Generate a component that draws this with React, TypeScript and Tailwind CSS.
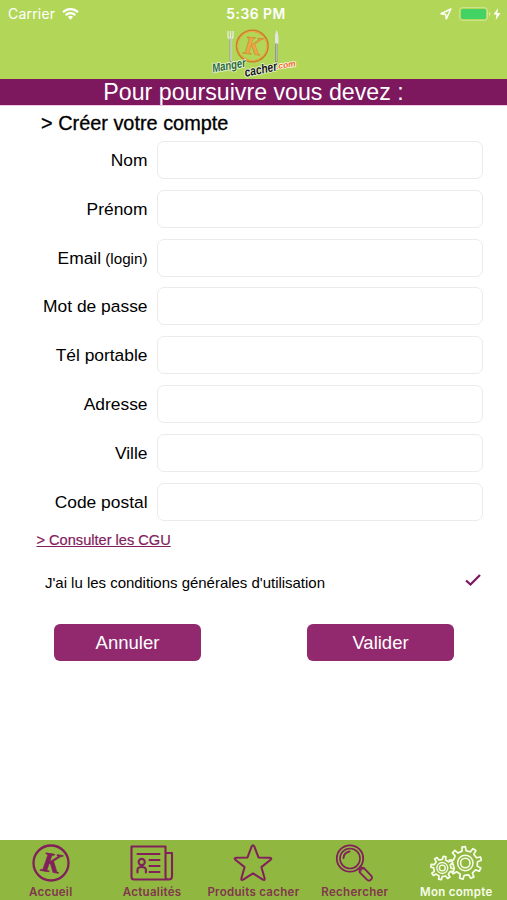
import type { ReactNode } from "react";

type Field = {
  label: string;
  hint?: string;
  name: string;
  type?: string;
};

type Tab = {
  label: string;
  icon: ReactNode;
  active?: boolean;
};

const fields: Field[] = [
  { label: "Nom", name: "lastname" },
  { label: "Prénom", name: "firstname" },
  { label: "Email", hint: "(login)", name: "email", type: "email" },
  { label: "Mot de passe", name: "password", type: "password" },
  { label: "Tél portable", name: "phone", type: "tel" },
  { label: "Adresse", name: "address" },
  { label: "Ville", name: "city" },
  { label: "Code postal", name: "zip" },
];

// Outline of a gear: flat teeth joined by short flanks
function gearPath(cx: number, cy: number, outer: number, inner: number, teeth: number, turn = 0) {
  const step = (Math.PI * 2) / teeth;
  const points: string[] = [];

  for (let i = 0; i < teeth; i++) {
    const a = i * step + turn;
    const corners: [number, number][] = [
      [inner, a - step * 0.24],
      [outer, a - step * 0.15],
      [outer, a + step * 0.15],
      [inner, a + step * 0.24],
    ];
    corners.forEach(([r, t]) => {
      points.push(`${(cx + r * Math.cos(t)).toFixed(2)} ${(cy + r * Math.sin(t)).toFixed(2)}`);
    });
  }

  return `M${points.join("L")}Z`;
}

function WifiIcon() {
  return (
    <svg viewBox="0 0 17 12" className="h-3 w-[17px]" fill="none" stroke="#fff" strokeWidth="2.2">
      <path d="M1 4.3a10.6 10.6 0 0 1 15 0M3.7 7.1a6.8 6.8 0 0 1 9.6 0" />
      <path d="M8.5 11.7 5.9 9.1a3.7 3.7 0 0 1 5.2 0Z" fill="#fff" stroke="none" />
    </svg>
  );
}

function LocationIcon() {
  return (
    <svg viewBox="0 0 12 12" className="size-3" fill="none" stroke="#fff" strokeWidth="1.5" strokeLinejoin="round">
      <path d="M10.8 1 1 5.7l4.7.7.6 4.6Z" />
    </svg>
  );
}

function BatteryIcon() {
  return (
    <svg viewBox="0 0 32 14" className="h-3.5 w-8">
      <rect x=".6" y=".6" width="27.8" height="12.8" rx="3" fill="none" stroke="#cfe695" strokeWidth="1" />
      <rect x="2" y="2" width="25" height="10" rx="1.6" fill="#43d365" />
      <path d="M30 5c1.8.6 1.8 3.4 0 4Z" fill="#d9ecae" />
    </svg>
  );
}

function BoltIcon() {
  return (
    <svg viewBox="0 0 8 12" className="h-3 w-2" fill="#fff">
      <path d="M5 0 .6 6.5h2.8L2.7 12l4.8-7H4.3Z" />
    </svg>
  );
}

function Logo() {
  return (
    <svg viewBox="0 0 88 52" className="ml-[3px] h-[52px] w-[88px] overflow-visible">
      <path d="M17 4v5q0 2.8 2.5 2.8T22 9V4M19.500 4v7" fill="none" stroke="#e8ebe4" strokeWidth="1.3" />
      <path d="M19.500 11.500V35" stroke="#9da39c" strokeWidth="2.2" />
      <path d="M20 12v22" stroke="#e8ebe6" strokeWidth=".9" />
      <path d="M65.500 3q2.500 3 2 14H64V8Z" fill="#e3e6df" />
      <path d="M65.300 16.500V35" stroke="#8e938f" strokeWidth="2.4" />
      <path d="M65.600 17v17" stroke="#c8cdc6" strokeWidth=".8" />
      <circle cx="41.3" cy="19" r="15.4" fill="none" stroke="#c97f28" strokeWidth="2.4" />
      <circle cx="41.3" cy="19" r="14.8" fill="none" stroke="#f0b552" strokeWidth=".9" />
      <text
        x="41.5"
        y="27.500"
        textAnchor="middle"
        transform="rotate(6 41 19)"
        className="font-['Liberation_Serif',serif] text-[26px] font-bold italic"
        fill="#eda947"
        stroke="#c97f28"
        strokeWidth=".5"
      >
        K
      </text>
      <g
        className="font-['Liberation_Sans',sans-serif] font-bold italic"
        stroke="#f4f8e8"
        strokeWidth="1.6"
        paintOrder="stroke"
        strokeLinejoin="round"
      >
        <text x="2" y="45.500" transform="rotate(-10 2 45.500)" fill="#2a6b35" fontSize="12.5" textLength="34" lengthAdjust="spacingAndGlyphs">
          Manger
        </text>
        <text x="34.500" y="50" transform="rotate(-12 34.500 50)" fill="#151a13" fontSize="13" textLength="33" lengthAdjust="spacingAndGlyphs">
          cacher
        </text>
        <text x="65.5" y="42" transform="rotate(-8 65.5 42)" fill="#f36a24" fontSize="8.4">
          .com
        </text>
      </g>
    </svg>
  );
}

function HomeIcon() {
  return (
    <svg viewBox="0 0 44 40" className="h-10 w-11">
      <circle cx="22" cy="20" r="17.5" fill="none" stroke="#81205b" strokeWidth="2.3" />
      <text
        x="22"
        y="29"
        textAnchor="middle"
        transform="rotate(9 22 20)"
        className="font-['Liberation_Serif',serif] text-[28px] italic"
        fill="#81205b"
        stroke="#81205b"
        strokeWidth=".6"
      >
        K
      </text>
    </svg>
  );
}

function NewsIcon() {
  return (
    <svg viewBox="0 0 44 40" className="h-10 w-11" fill="none" stroke="#81205b" strokeWidth="2.1" strokeLinejoin="round" strokeLinecap="round">
      <path d="M35.5 33.5V3.5H1.5v30.500q0 2.500 2.500 2.500h34.500M35.500 10h6.500v23.500q0 3-3.300 3t-3.200-3" />
      <path d="M7.500 11h22M19.500 17h10M19.500 23h10M19.500 29h10" />
      <circle cx="11.7" cy="19" r="3.1" />
      <path d="M7.500 29.500v-2.500q0-3 4.200-3t4.200 3v2.500" />
    </svg>
  );
}

function StarIcon() {
  return (
    <svg viewBox="0 0 44 40" className="h-10 w-11" fill="none" stroke="#81205b" strokeWidth="2" strokeLinejoin="round">
      <path d="M20.700 3.400q1.300-2.200 2.600 0l4.200 11 11.400.3q2.400.3.700 2.100l-9.200 7.300 3.200 11.200q.4 2.400-1.800 1.400L22 30.300l-9.800 6.400q-2.200 1-1.800-1.400l3.200-11.200-9.200-7.300q-1.700-1.800.7-2.100l11.400-.3Z" />
    </svg>
  );
}

function SearchIcon() {
  return (
    <svg viewBox="0 0 44 40" className="h-10 w-11" fill="none" stroke="#81205b" strokeLinejoin="round" strokeLinecap="round">
      <circle cx="17" cy="15.5" r="13.2" strokeWidth="1.8" />
      <circle cx="17" cy="15.5" r="10" strokeWidth="1.6" />
      <path d="M10.500 15q.5-5.500 6-6.500" strokeWidth="1.9" />
      <path d="m25.500 25.500 2.500 2.500M27.500 23.500l2.500 2.500" strokeWidth="1.4" />
      <path d="m31 25.200 7.300 7.600q1.500 2-.3 3.800t-3.800.3l-7.500-7.600q-1-1.300 1.200-3.300t3.100-.8Z" strokeWidth="1.8" />
    </svg>
  );
}

function GearsIcon() {
  return (
    <svg viewBox="0 0 52 40" className="h-10 w-[52px]" fill="none" stroke="#f7fce9" strokeWidth="1.7" strokeLinejoin="round">
      <path d={gearPath(35.3, 20, 16.3, 12.3, 9, -Math.PI / 2 - 0.1)} />
      <circle cx="35.3" cy="20" r="7.7" strokeWidth="1.5" />
      <circle cx="35.3" cy="20" r="4.7" strokeWidth="1.6" />
      <path d={gearPath(12.3, 25, 11.7, 8.7, 8, 0.2)} fill="#90b840" />
      <circle cx="12.3" cy="25" r="5.5" strokeWidth="1.3" />
      <circle cx="12.3" cy="25" r="2.9" strokeWidth="1.4" />
    </svg>
  );
}

const tabs: Tab[] = [
  { label: "Accueil", icon: <HomeIcon /> },
  { label: "Actualités", icon: <NewsIcon /> },
  { label: "Produits cacher", icon: <StarIcon /> },
  { label: "Rechercher", icon: <SearchIcon /> },
  { label: "Mon compte", icon: <GearsIcon />, active: true },
];

function Header() {
  return (
    <header className="flex h-[79px] shrink-0 flex-col items-center bg-[#b2d758]">
      <div className="grid h-[27px] w-full grid-cols-3 items-center pr-1.5 pl-2 font-['Inter',sans-serif] text-sm text-white">
        <div className="flex items-center gap-[7px]">
          <span className="tracking-[0.2px]">Carrier</span>
          <WifiIcon />
        </div>
        <span className="pt-0.5 pl-[3px] text-center text-[13.8px] font-semibold tracking-[0.5px]">5:36 PM</span>
        <div className="flex items-center justify-end">
          <LocationIcon />
          <span className="ml-[7px] flex">
            <BatteryIcon />
          </span>
          <span className="ml-0.5 flex">
            <BoltIcon />
          </span>
        </div>
      </div>
      <Logo />
    </header>
  );
}

export default function App() {
  return (
    <div className="flex h-[900px] w-[507px] flex-col overflow-hidden bg-white font-['Liberation_Sans',sans-serif] text-black">
      <Header />

      <h1 className="h-[27px] shrink-0 border-b border-[#efc9e6] bg-[#7d175e] text-center text-[23.2px] leading-[27px] whitespace-nowrap text-white">
        Pour poursuivre vous devez :
      </h1>

      <main className="flex-1">
        <h2 className="h-[35px] pl-[41px] text-[19.9px] leading-[35px] [-webkit-text-stroke:0.3px_#000]">
          &gt; Créer votre compte
        </h2>

        <form>
          <div className="flex flex-col gap-[10.8px]">
            {fields.map((field) => (
              <label key={field.name} className="flex h-[38px] items-center">
                <span className="w-[147.5px] text-right text-[17.4px]">
                  {field.label}
                  {field.hint && <span className="text-[15.2px]"> {field.hint}</span>}
                </span>
                <input
                  name={field.name}
                  type={field.type ?? "text"}
                  className="ml-[9.5px] h-[38px] w-[326px] rounded-[7px] border border-[#ebebeb] px-2 outline-none"
                />
              </label>
            ))}
          </div>

          <a href="#cgu" className="mt-[9px] ml-[36.5px] block w-fit text-[14.6px] leading-5 text-[#81205b] underline [-webkit-text-stroke:0.2px_#81205b]">
            &gt; Consulter les CGU
          </a>

          <div className="mt-[22px] flex h-6 items-center justify-between pr-[25px] pl-[45px]">
            <span className="text-[15px] tracking-[-0.02px]">J'ai lu les conditions générales d'utilisation</span>
            <svg viewBox="0 0 18 14" className="mb-[7px] h-3.5 w-[18px]" fill="none" stroke="#7d175e" strokeWidth="2.3">
              <path d="m2 7.500 4.500 4L16 2" />
            </svg>
          </div>

          <div className="mt-[28px] flex justify-between pr-[53px] pl-[54px] text-[18.5px] text-white">
            <button type="button" className="h-[37px] w-[147px] rounded-md bg-[#92296f] pt-px">
              Annuler
            </button>
            <button type="button" className="h-[37px] w-[147px] rounded-md bg-[#92296f] pt-px">
              Valider
            </button>
          </div>
        </form>
      </main>

      <nav className="grid h-[60px] shrink-0 grid-cols-5 bg-[#90b840]">
        {tabs.map((tab) => (
          <div
            key={tab.label}
            className={`flex flex-col items-center pt-[3px] font-['Inter',sans-serif] text-[11.5px] leading-[18px] font-semibold tracking-[0.3px] whitespace-nowrap ${
              tab.active ? "text-[#f7fce9]" : "text-[#81374d]"
            }`}
          >
            {tab.icon}
            <span>{tab.label}</span>
          </div>
        ))}
      </nav>
    </div>
  );
}
